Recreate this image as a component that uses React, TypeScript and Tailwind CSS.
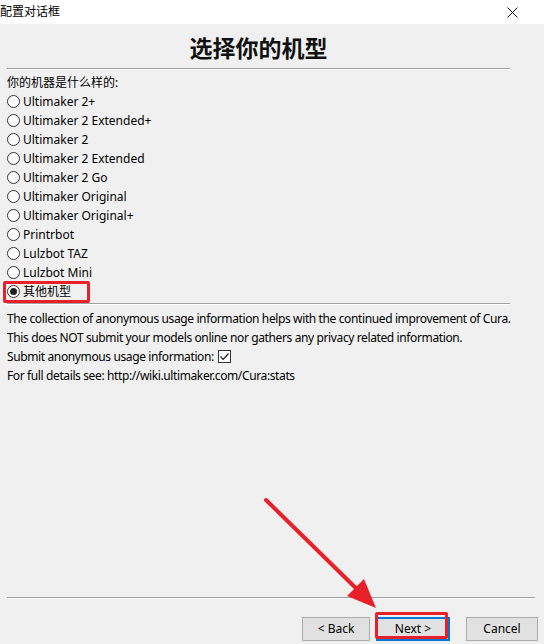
import React from "react";

const font = { fontFamily: '"Segoe UI", "Noto Sans", "Noto Sans CJK SC", sans-serif' };

function Radio({ checked }: { checked?: boolean }) {
  return (
    <span className="relative inline-flex h-[13px] w-[13px] shrink-0 items-center justify-center rounded-full border border-[#333] bg-white">
      {checked && <span className="h-[7px] w-[7px] rounded-full bg-[#222]" />}
    </span>
  );
}

const options = [
  "Ultimaker 2+",
  "Ultimaker 2 Extended+",
  "Ultimaker 2",
  "Ultimaker 2 Extended",
  "Ultimaker 2 Go",
  "Ultimaker Original",
  "Ultimaker Original+",
  "Printrbot",
  "Lulzbot TAZ",
  "Lulzbot Mini",
];

export default function App() {
  return (
    <div className="relative h-[644px] w-[544px] overflow-hidden bg-[#f0f0f0] text-[12px] text-black" style={font}>
      {/* title bar */}
      <div className="flex h-[24px] items-center justify-between bg-white pl-0 pr-[26px]">
        <span className="text-[12px] leading-none">配置对话框</span>
        <svg width="11" height="11" viewBox="0 0 11 11">
          <path d="M0.5 0.5 L10.5 10.5 M10.5 0.5 L0.5 10.5" stroke="#111" strokeWidth="1" />
        </svg>
      </div>

      <div className="ml-[7px] flex w-[503px] flex-col">
        <div
          className="flex h-[44px] items-center justify-center pt-[2px] text-[23px] font-bold leading-none text-[#111]"
          style={{ fontFamily: '"Noto Sans CJK SC", serif' }}
        >
          选择你的机型
        </div>
        <div className="h-[2px] w-[503px] border-t border-[#a0a0a0] bg-white" />

        <div className="mt-[3px] flex flex-col leading-[19px]">
          <div className="h-[19px]">你的机器是什么样的:</div>
          {options.map((o) => (
            <div key={o} className="flex h-[19px] items-center gap-[3px]">
              <Radio />
              <span>{o}</span>
            </div>
          ))}
          <div className="flex h-[19px] items-center gap-[3px]">
            <Radio checked />
            <span>其他机型</span>
          </div>
        </div>

        <div className="mt-[2px] h-[2px] w-[503px] border-t border-[#a0a0a0] bg-white" />

        <div className="mt-[4px] flex flex-col whitespace-nowrap leading-[19px] tracking-[-0.38px]">
          <div>The collection of anonymous usage information helps with the continued improvement of Cura.</div>
          <div>This does NOT submit your models online nor gathers any privacy related information.</div>
          <div className="flex items-center gap-[4px]">
            <span>Submit anonymous usage information:</span>
            <span className="flex h-[13px] w-[13px] items-center justify-center border border-[#333] bg-white">
              <svg width="11" height="11" viewBox="0 0 11 11">
                <path d="M1.5 5.5 L4.2 8.3 L9.5 2.5" fill="none" stroke="#222" strokeWidth="1.2" />
              </svg>
            </span>
          </div>
          <div>For full details see: http://wiki.ultimaker.com/Cura:stats</div>
        </div>
      </div>

      {/* bottom area */}
      <div className="absolute left-[7px] top-[597px] h-[2px] w-[528px] border-t border-[#a0a0a0] bg-white" />
      <div className="absolute left-[302px] top-[617px] flex gap-[6px]">
        <button className="h-[24px] w-[68px] border border-[#adadad] bg-[#e1e1e1] text-[12px]">&lt; Back</button>
        <button className="h-[24px] w-[74px] border-2 border-[#0078d7] bg-[#e1e1e1] text-[12px]">Next &gt;</button>
        <button className="ml-[10px] h-[24px] w-[72px] border border-[#adadad] bg-[#e1e1e1] text-[12px]">Cancel</button>
      </div>

      {/* annotations */}
      <div className="absolute left-[3px] top-[281px] h-[22px] w-[87px] rounded-[2px] border-[3px] border-[#e8202a]" />
      <div className="absolute left-[375px] top-[612px] h-[27px] w-[73px] rounded-[2px] border-[3px] border-[#e8202a]" />
      <svg className="absolute left-0 top-0" width="544" height="644" viewBox="0 0 544 644">
        <line x1="266" y1="500" x2="365" y2="597" stroke="#e8202a" strokeWidth="4" strokeLinecap="round" />
        <polygon points="376,608 347,596 364,579" fill="#e8202a" />
      </svg>
    </div>
  );
}
